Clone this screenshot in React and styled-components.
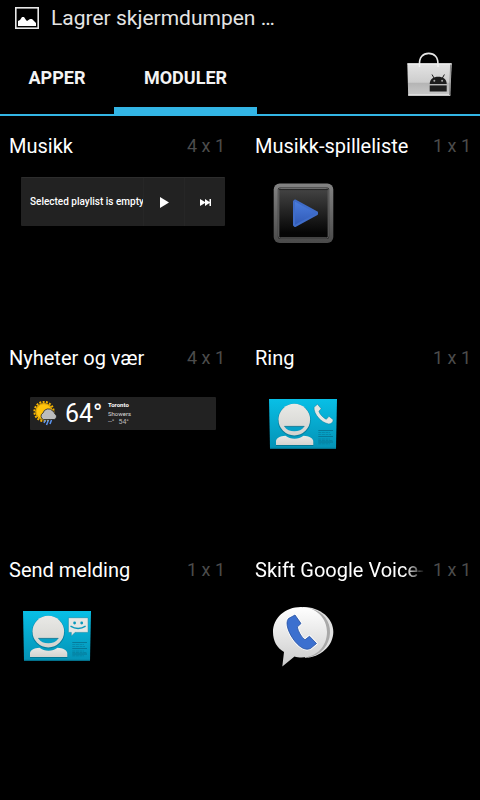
import React from "react";
import styled, { createGlobalStyle, css } from "styled-components";

const ACCENT = "#33b5e5";

const GlobalStyle = createGlobalStyle`
  *, *::before, *::after { box-sizing: border-box; }
  html, body { margin: 0; background: #000; }
  body { font-family: Roboto, "Noto Sans", sans-serif; color: #fff; }
  svg { display: block; flex: none; }
`;

const Screen = styled.div`
  min-height: 100vh;
  display: flex;
  flex-direction: column;
  background: #000;
`;

const StatusBar = styled.header`
  display: flex;
  align-items: center;
  gap: 12px;
  height: 36px;
  padding: 0 15px;
  font-size: 21px;
  line-height: 36px;
  color: #e4e4e4;
  white-space: nowrap;
`;

const TabBar = styled.nav`
  display: grid;
  grid-template-columns: 114px 143px 1fr;
  align-items: stretch;
  height: 80px;
  border-bottom: 2px solid ${ACCENT};
`;

const Tab = styled.button`
  border: 0;
  background: none;
  color: #f3f3f3;
  font: 700 18px/24px Roboto, "Noto Sans", sans-serif;
  padding: 12px 0 0;
  border-bottom: 7px solid transparent;
  ${(p) => p.$active && css`border-bottom-color: ${ACCENT};`}
`;

const MarketButton = styled.button`
  justify-self: end;
  align-self: start;
  padding: 14px 27px 0 0;
  border: 0;
  background: none;
`;

const WidgetGrid = styled.main`
  display: grid;
  grid-template-columns: repeat(2, minmax(0, 1fr));
  grid-auto-rows: 212px;
  column-gap: 12px;
`;

const Cell = styled.section`
  display: flex;
  flex-direction: column;
  gap: 17px;
  padding: 16px 9px 0;
`;

const CellHeader = styled.div`
  display: flex;
  align-items: center;
  gap: 8px;
  height: 28px;
  line-height: 28px;
`;

const CellTitle = styled.h2`
  margin: 0;
  flex: 1;
  min-width: 0;
  overflow: hidden;
  white-space: nowrap;
  font-size: 20px;
  font-weight: 400;
  ${(p) => p.$fade && css`
    mask-image: linear-gradient(to right, #000 calc(100% - 20px), transparent);
  `}
`;

const CellSize = styled.span`
  font-size: 18px;
  color: #4c4c4c;
  white-space: nowrap;
`;

const Preview = styled.div`
  padding-left: 12px;
`;

const MusicWidget = styled.div`
  display: grid;
  grid-template-columns: minmax(0, 1fr) 41px 41px;
  align-items: center;
  height: 49px;
  border-radius: 1px;
  background: #222;
  border-top: 1px solid #2d2d2d;
`;

const MusicText = styled.span`
  margin-left: 9px;
  overflow: hidden;
  white-space: nowrap;
  font-size: 10px;
  line-height: 14px;
  font-weight: 500;
`;

const MusicButton = styled.button`
  display: flex;
  align-items: center;
  justify-content: center;
  height: 100%;
  padding: 0;
  border: 0;
  border-left: 1px solid #262626;
  background: none;
`;

const WeatherWidget = styled.div`
  display: flex;
  align-items: center;
  height: 33px;
  margin: 8px 9px 0;
  padding-left: 3px;
  border-radius: 1px;
  background: #222;
`;

const Temperature = styled.span`
  margin-left: 8px;
  width: 43px;
  font-size: 25px;
  line-height: 32px;
`;

const WeatherDetails = styled.div`
  display: flex;
  flex-direction: column;
  font-size: 6px;
  line-height: 9px;
  color: #ddd;
`;

const City = styled.strong`
  color: #fff;
`;

const HighLow = styled.span`
  display: flex;
  gap: 4px;
  font-size: 7px;
  color: #bbb;
`;

function PictureIcon() {
  return (
    <svg width="24" height="22" viewBox="0 0 24 22">
      <rect x="0.8" y="0.8" width="22.4" height="20.4" fill="none" stroke="#e8e8e8" strokeWidth="1.6" />
      <path d="M3 19V14l2-1 2-3h2l2 3 1 1 3-2h2l2 2 2 2v3z" fill="#fff" />
    </svg>
  );
}

function MarketIcon() {
  return (
    <svg width="48" height="48" viewBox="0 0 48 48">
      <defs>
        <linearGradient id="bag" x1="0" y1="0" x2="0" y2="1">
          <stop offset="0" stopColor="#e4e4e4" />
          <stop offset="0.59" stopColor="#cdcdcd" />
          <stop offset="0.6" stopColor="#b4b4b4" />
          <stop offset="1" stopColor="#c9c9c9" />
        </linearGradient>
      </defs>
      <path d="M14.5 15C14 7 18 3.4 23.7 3.4S33.4 7 32.9 15" fill="none" stroke="#e6e6e6" strokeWidth="1.6" />
      <path d="M2.3 13.3H46.7L45.3 45.7H3.2z" fill="url(#bag)" />
      <path d="M2.5 14H46.5M3.2 45H45.3" stroke="#f4f4f4" strokeWidth="1" />
      <path d="M45.6 14.5l-1.1 30.5" stroke="#888" strokeWidth="1" />
      <path d="M14.5 14v3M33 14v3" stroke="#f4f4f4" strokeWidth="1.5" />
      <path d="M24.7 34C24.7 29 28.5 26.7 33.2 26.7S41.7 29 41.7 34z" fill="#1c1c1c" />
      <path d="M27 24.5l2 3.5M39.4 24.5l-2 3.5" stroke="#1c1c1c" strokeWidth="1" />
      <circle cx="29.3" cy="30.7" r="1" fill="#aaa" />
      <circle cx="37.1" cy="30.7" r="1" fill="#aaa" />
      <path d="M24.7 35.4H41.7V41.5H24.7z" fill="#1c1c1c" />
    </svg>
  );
}

function PlayIcon() {
  return (
    <svg width="9" height="11" viewBox="0 0 9 11"><path d="M0 0l9 5.5L0 11z" fill="#fff" /></svg>
  );
}

function NextIcon() {
  return (
    <svg width="11" height="7" viewBox="0 0 11 7">
      <path d="M0 0l5 3V0l4.5 3V0H11v7H9.5V4L5 7V4L0 7z" fill="#fff" />
    </svg>
  );
}

function PlaylistIcon() {
  return (
    <svg width="72" height="72" viewBox="0 0 72 72">
      <defs>
        <linearGradient id="frame" x1="0" y1="0" x2="0" y2="1">
          <stop offset="0" stopColor="#838383" /><stop offset="1" stopColor="#4a4a4a" />
        </linearGradient>
        <linearGradient id="panel" x1="0" y1="0" x2="0" y2="1">
          <stop offset="0" stopColor="#444" /><stop offset="0.9" stopColor="#050505" />
        </linearGradient>
        <linearGradient id="arrow" x1="0" y1="0" x2="0" y2="1">
          <stop offset="0" stopColor="#4c7fe0" /><stop offset="1" stopColor="#2f58b4" />
        </linearGradient>
      </defs>
      <rect x="6.7" y="6.4" width="59.6" height="59.6" rx="6" fill="url(#frame)" />
      <rect x="10.8" y="10.5" width="51.4" height="51.4" rx="2" fill="#2a2a2a" />
      <rect x="11.8" y="11.5" width="49.4" height="49.4" rx="1.5" fill="url(#panel)" stroke="#6c6c6c" strokeWidth="1" />
      <path d="M12 12.6H61" stroke="#1a1a1a" strokeWidth="0.8" />
      <path d="M28 23.5L50 35.5V37L28 49l-1-1V24.5z" fill="url(#arrow)" stroke="#3f6cc8" strokeWidth="2" strokeLinejoin="round" />
    </svg>
  );
}

function WeatherIcon() {
  return (
    <svg width="24" height="25" viewBox="0 0 24 25">
      <circle cx="11" cy="10.5" r="9.6" fill="none" stroke="#f5b400" strokeWidth="2" strokeDasharray="2 1.35" />
      <circle cx="11" cy="10.5" r="8.6" fill="#ffc40c" />
      <circle cx="11" cy="10.5" r="7.8" fill="none" stroke="#c98d00" strokeWidth="0.6" />
      <path d="M10.5 18.5a3.5 3.5 0 0 1-.5-6.500 5.500 5.500 0 0 1 9.700-2 3.600 3.600 0 0 1 2 2.800 3 3 0 0 1-.5 5.700z" fill="#bcbcbc" stroke="#222" strokeWidth="0.8" />
      <path d="M12.5 19l-1.5 3M15.5 19l-2 5M18.5 19l-1.5 4" stroke="#5b94ee" strokeWidth="1.5" />
    </svg>
  );
}

function ContactCard({ id, children }) {
  return (
    <svg width="72" height="72" viewBox="0 0 72 72">
      <defs>
        <linearGradient id={`${id}-card`} x1="0" y1="0" x2="0" y2="1">
          <stop offset="0" stopColor="#08bfe6" /><stop offset="1" stopColor="#0492b5" />
        </linearGradient>
        <linearGradient id={`${id}-face`} x1="0" y1="0" x2="0" y2="1">
          <stop offset="0" stopColor="#e9e9e6" /><stop offset="1" stopColor="#d3d3cf" />
        </linearGradient>
      </defs>
      <path d="M2 10H70L69 59.8H3z" fill={`url(#${id}-card)`} />
      <path d="M3 59.3H69" stroke="#04718e" strokeWidth="0.8" />
      <path d="M9 57V53c0-3.5 4-5.5 9-6 5 4 14 4 19 0 5 .5 9.3 2.5 9.3 6v4z" fill="#036c86" opacity="0.7" />
      <path d="M9 56V52.5c0-3.5 4-5.2 9.5-5.7 5 4 13 4 18 0 5.5.5 9.8 2.2 9.8 5.7V56z" fill={`url(#${id}-face)`} />
      <circle cx="27.3" cy="31.2" r="16.4" fill="#04718e" opacity="0.7" />
      <circle cx="27.3" cy="30.6" r="15.8" fill={`url(#${id}-face)`} />
      <path d="M17.3 37.5H37.4C35 41 31.5 42.3 27.3 42.3S19.6 41 17.3 37.5z" fill="#06a0c6" />
      <path d="M17.3 37.4H37.4" stroke="#056f8c" strokeWidth="0.8" />
      <path d="M51.3 41.5H66M51.3 47.5H66M51.3 53H66" stroke="#05708e" strokeWidth="0.8" />
      <path d="M51.3 43.5H63M51.3 45.5H64M51.3 50H63M51.3 51.5H66M51.3 54.8H63" stroke="#05708e" strokeWidth="0.8" strokeDasharray="3 0.6" opacity="0.6" />
      {children}
    </svg>
  );
}

function CallIcon() {
  return (
    <ContactCard id="call">
      <path d="M50.5 15.2L54.2 19.7 51.9 22.2C52.5 25 56 28.7 59.3 30.3L62 27.3 66.2 30.8C66 33.5 64 35.3 61.5 34.9 54 33.6 46.6 25 47 18.3z" fill="#e6e6e3" stroke="#057f9d" strokeWidth="0.5" />
    </ContactCard>
  );
}

function MessageIcon() {
  return (
    <ContactCard id="message">
      <path d="M48 16.7H66.5q.6 0 .6.6V30.8q0 .6-.6.6H54L50.3 35.2V31.4H48q-.6 0-.6-.6V17.3q0-.6.6-.6z" fill="#e6e6e3" stroke="#057f9d" strokeWidth="0.5" />
      <circle cx="53.6" cy="22" r="1.4" fill="#0899bd" />
      <circle cx="60.7" cy="22" r="1.4" fill="#0899bd" />
      <path d="M49.5 25.2Q57.2 29.8 64.6 25.2" fill="none" stroke="#0899bd" strokeWidth="1.4" />
    </ContactCard>
  );
}

const HANDSET = "M28 14L21.5 17.5C17.5 22 22 33 28 40.5 34 47.5 39 49.5 43.5 47.5L49.5 42.5 42.5 35.2 38 38.8C34.5 36.5 31 30 30.3 26L34 22.5z";

function VoiceIcon() {
  return (
    <svg width="72" height="72" viewBox="0 0 72 72">
      <defs>
        <linearGradient id="bubble" x1="0" y1="0" x2="0" y2="1">
          <stop offset="0" stopColor="#fff" /><stop offset="1" stopColor="#cbcbcb" />
        </linearGradient>
      </defs>
      <path d="M36 6C53 6 66.3 17 66.3 31S53 56.7 38 56.7z" fill="#e2e2e2" />
      <path d="M43 7.5C56 10 63.5 20 63 32 62.5 44 54 54.5 41 56.5z" fill="#a9a9a9" />
      <path d="M34 6C49 6 60 17 60 31S50 56.5 34.5 56.5c-2.5 0-5-.4-7-1L15.3 65.5 17 51C10 47 6 40 6 31 6 17 18 6 34 6z" fill="url(#bubble)" />
      <path d={HANDSET} fill="none" stroke="#fff" strokeWidth="2.4" strokeLinejoin="round" />
      <path d={HANDSET} fill="#3c70cf" stroke="#244f9e" strokeWidth="0.8" />
    </svg>
  );
}

function WidgetCell({ title, size, fade, children }) {
  return (
    <Cell>
      <CellHeader>
        <CellTitle $fade={fade}>{title}</CellTitle>
        <CellSize>{size}</CellSize>
      </CellHeader>
      <Preview>{children}</Preview>
    </Cell>
  );
}

export default function App() {
  return (
    <>
      <GlobalStyle />
      <Screen>
        <StatusBar>
          <PictureIcon />
          <span>Lagrer skjermdumpen …</span>
        </StatusBar>
        <TabBar>
          <Tab type="button">APPER</Tab>
          <Tab type="button" $active>MODULER</Tab>
          <MarketButton type="button" aria-label="Market"><MarketIcon /></MarketButton>
        </TabBar>
        <WidgetGrid>
          <WidgetCell title="Musikk" size="4 x 1">
            <MusicWidget>
              <MusicText>Selected playlist is empty</MusicText>
              <MusicButton type="button" aria-label="Play"><PlayIcon /></MusicButton>
              <MusicButton type="button" aria-label="Next"><NextIcon /></MusicButton>
            </MusicWidget>
          </WidgetCell>
          <WidgetCell title="Musikk-spilleliste" size="1 x 1"><PlaylistIcon /></WidgetCell>
          <WidgetCell title="Nyheter og vær" size="4 x 1">
            <WeatherWidget>
              <WeatherIcon />
              <Temperature>64°</Temperature>
              <WeatherDetails>
                <City>Toronto</City>
                <span>Showers</span>
                <HighLow><span>--°</span><span>54°</span></HighLow>
              </WeatherDetails>
            </WeatherWidget>
          </WidgetCell>
          <WidgetCell title="Ring" size="1 x 1"><CallIcon /></WidgetCell>
          <WidgetCell title="Send melding" size="1 x 1"><MessageIcon /></WidgetCell>
          <WidgetCell title="Skift Google Voice-i" size="1 x 1" fade><VoiceIcon /></WidgetCell>
        </WidgetGrid>
      </Screen>
    </>
  );
}
